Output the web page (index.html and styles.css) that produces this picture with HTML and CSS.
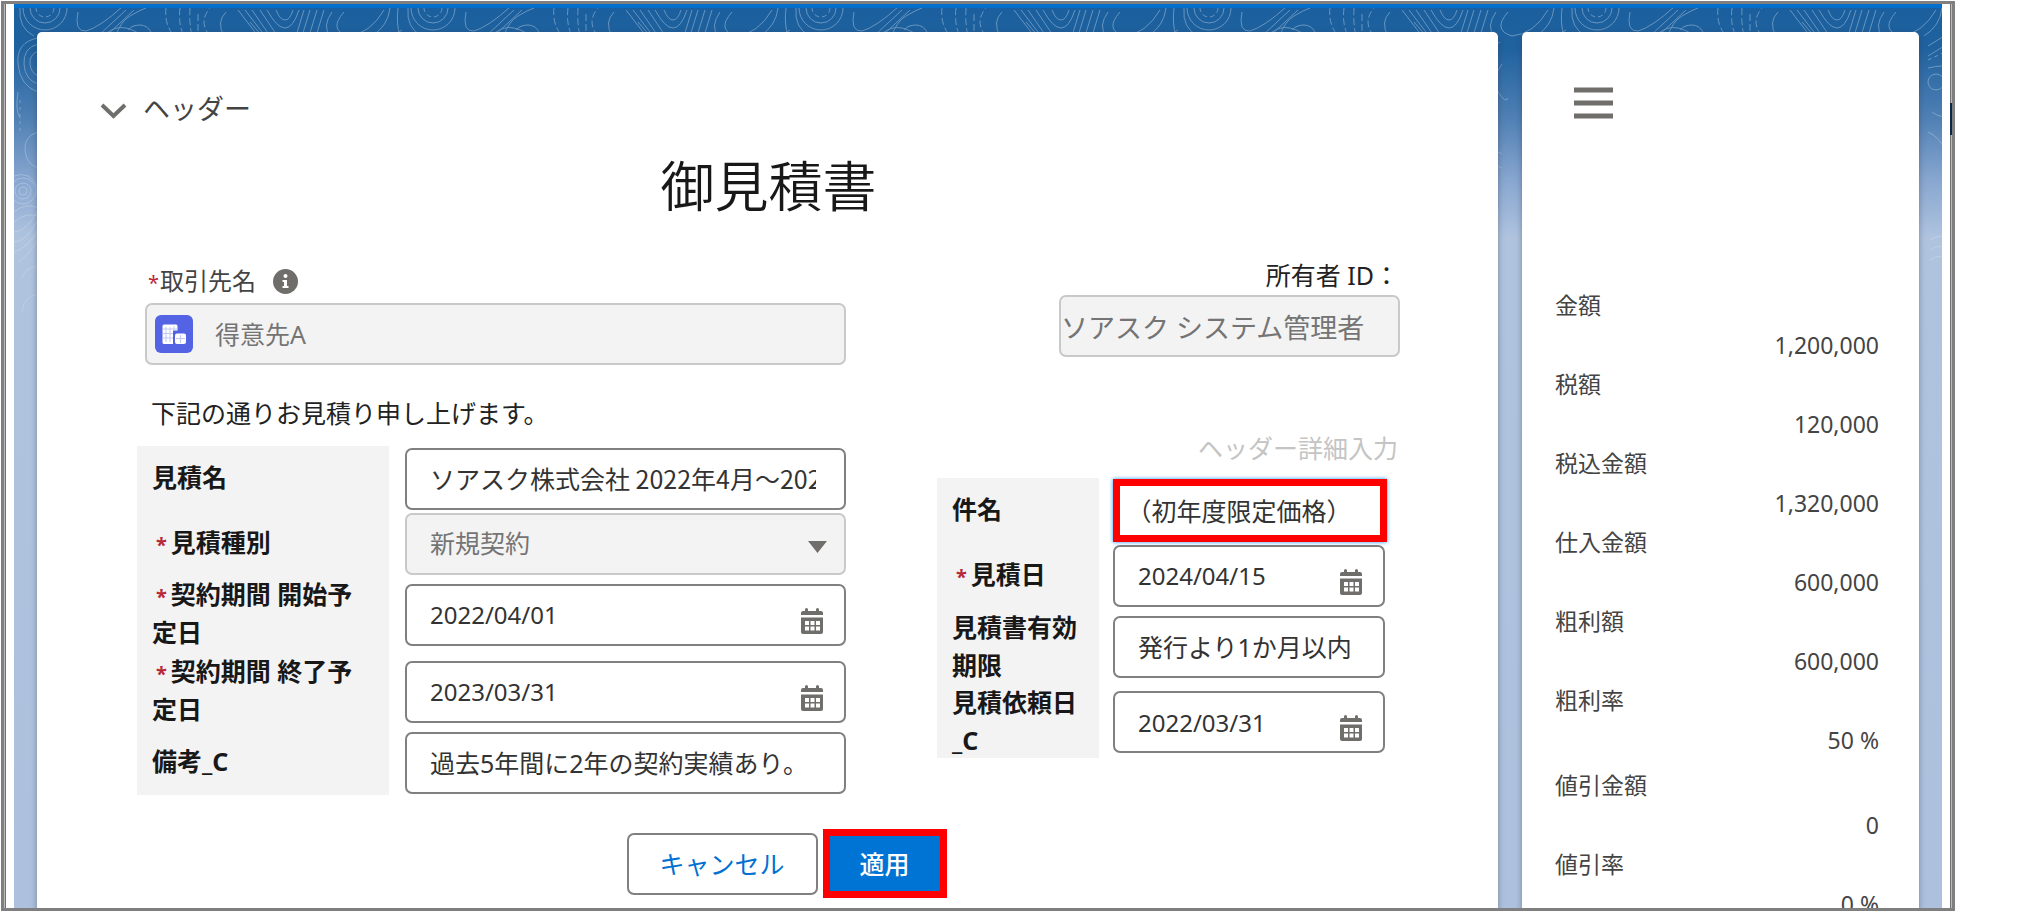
FILE: index.html
```html
<!DOCTYPE html>
<html lang="ja">
<head>
<meta charset="utf-8">
<meta name="viewport" content="width=device-width, initial-scale=1">
<title>御見積書</title>
<link rel="stylesheet" href="styles.css">
</head>
<body>
<svg class="sprite" aria-hidden="true">
  <symbol id="icon-calendar" viewBox="0 0 24 26">
    <path d="M1 7V5q0-2 2-2h2V1.500q0-1.500 1.500-1.500T8 1.500V3h8V1.500q0-1.500 1.500-1.500T19 1.500V3h2q2 0 2 2v2z"/>
    <path fill-rule="evenodd" d="M1 9.500h22V24q0 2-2 2H3q-2 0-2-2zM5 13v4h4v-4zm5.500 0v4h4v-4zm5.500 0v4h4v-4zM5 18.500v4h4v-4zm5.500 0v4h4v-4zm5.500 0v4h4v-4z"/>
  </symbol>
</svg>
<div class="frame">
  <div class="theme">
    <svg class="topo" aria-hidden="true">
      <defs>
        <pattern id="topo-lines" width="388" height="320" patternUnits="userSpaceOnUse">
          <g fill="none" stroke="#fff" stroke-width="1">
            <circle cx="31" cy="0" r="9" stroke-dasharray="5 3"/>
            <circle cx="31" cy="0" r="15"/>
            <circle cx="31" cy="0" r="22"/>
            <path d="M6 0q-2 20 14 28M64 4q-4 20 8 19q14-4 36-24M84 28L112 2M92 28L120 2M102 28q4-14 14-20t16-8M88 29q12-12 24-9t16 9M114 22q4-5 12-5t12 9"/>
            <path d="M152 0q-2 16 8 28M166 0q-2 16 4 28M196 28q-12-14 0-28M176 0q-1 16 2 28M184 6v20" stroke-dasharray="7 3"/>
            <path d="M210 28q-8-14 2-24M224 2l20 26M231 2l20 26M238 2l18 26M246 2l16 24M253 2q10 18 18 18t14-18M262 2q4 10 9 10t8-10M248 28l-12-14M290 2l-8 26M296 2l-8 26M303 2l-8 26M310 2l-8 26M318 4q-10 14-2 24M330 4q-16 18 4 24q22-2 36-26M376 0q-2 18-18 28M384 0q-2 16 2 28"/>
            <path d="M24 30q-22 4-20 26t20 28M24 36q-15 4-14 20t14 20M24 43q-9 4-8 13t8 12M4 84q-3 18 2 26M24 124q-14 4-13 18t13 18"/>
            <path d="M6 92v34" stroke-dasharray="3 4"/>
            <path d="M322 34q-16 10-26 2M324 56q-12 16-4 28t10 6M318 112q-10-12-22-6M324 146q-14-10-24 4M324 160q-12-8-24 2M318 200q-8-18-20 0M302 250q10-6 18-26"/>
            <circle cx="9" cy="183" r="4"/><circle cx="9" cy="183" r="8"/><circle cx="9" cy="183" r="13"/>
            <path d="M0 168q16-6 24 12M0 204q12-10 24-4M0 214q12-10 24-6M0 224q12 0 24-22M0 234q12 0 24-22M0 244q14-4 24-22M4 254q10-6 20-22M8 304q2-16 16-18M8 270q2-10 16-12"/>
            <path d="M362 38l26-16M362 48l26-16M362 60q16-4 26 0M366 104q10 8 22 2M362 124q22 10 20 44M364 232q12-8 24 0M364 242q12-8 24 0M364 252q12-8 24 0"/>
            <path d="M362 52l26-12" stroke-dasharray="4 3"/>
            <circle cx="370" cy="74" r="8"/>
          </g>
        </pattern>
        <linearGradient id="topo-fade" x1="0" y1="0" x2="0" y2="1">
          <stop offset="0" stop-color="#fff" stop-opacity=".34"/>
          <stop offset="1" stop-color="#fff" stop-opacity=".16"/>
        </linearGradient>
        <mask id="topo-mask"><rect width="100%" height="320" fill="url(#topo-fade)"/></mask>
      </defs>
      <rect width="100%" height="320" fill="url(#topo-lines)" mask="url(#topo-mask)"/>
    </svg>
    <main class="card quote">
      <button class="toggle" type="button" aria-expanded="true">
        <svg class="chevron" viewBox="0 0 27 20" aria-hidden="true"><path d="M2 6l11.500 11L25 6"/></svg>
        <span>ヘッダー</span>
      </button>
      <h1 class="title">御見積書</h1>
      <form class="form">
        <div class="columns">
          <div class="column column-left">
            <div class="account">
              <div class="account-label">
                <label for="account"><span class="star">*</span>取引先名</label>
                <svg class="info" viewBox="0 0 25 25" aria-label="情報"><circle cx="12.500" cy="12.500" r="12.500" fill="#706e6b"/><circle cx="12.500" cy="7" r="2" fill="#fff"/><path d="M9.500 11h4.500v6h1.500v2h-6v-2h1.500v-4H9.500z" fill="#fff"/></svg>
              </div>
              <div class="control">
                <input class="field field-account" id="account" type="text" value="得意先A" disabled>
                <svg class="account-icon" viewBox="0 0 38 38" aria-hidden="true">
                  <rect width="38" height="38" rx="6" fill="#5463e4"/>
                  <path fill="#fff" d="M9 9.500h12q1.500 0 1.500 1.500v4.500H18v13.500H9q-1.500 0-1.500-1.500V11q0-1.500 1.500-1.500z"/>
                  <rect x="20" y="18.500" width="11" height="10.500" rx="2" fill="#fff"/>
                  <path d="M11 12v15M15 12v15M19 11v4M8 14h14M8 18.500h10M8 23h10M25.500 20v8M21 23.500h9" stroke="#5463e4" stroke-width="1" opacity=".35"/>
                </svg>
              </div>
            </div>
            <p class="lead">下記の通りお見積り申し上げます。</p>
            <div class="rows rows-left">
              <label class="name" for="quote-name">見積名</label>
              <div class="cell"><div class="control"><input class="field field-long" id="quote-name" type="text" value="ソアスク株式会社 2022年4月～2023年3月"></div></div>
              <label class="name" for="quote-type"><span><span class="star">*</span>見積種別</span></label>
              <div class="cell"><div class="control">
                <select class="field" id="quote-type" disabled><option>新規契約</option></select>
                <svg class="arrow" viewBox="0 0 19 12" aria-hidden="true"><path d="M0 0h19L9.500 12z"/></svg>
              </div></div>
              <label class="name" for="start-date"><span><span class="star">*</span>契約期間 開始予定日</span></label>
              <div class="cell"><div class="control">
                <input class="field field-date" id="start-date" type="text" value="2022/04/01">
                <button class="pick" type="button" aria-label="日付を選択"><svg><use href="#icon-calendar"/></svg></button>
              </div></div>
              <label class="name" for="end-date"><span><span class="star">*</span>契約期間 終了予定日</span></label>
              <div class="cell"><div class="control">
                <input class="field field-date" id="end-date" type="text" value="2023/03/31">
                <button class="pick" type="button" aria-label="日付を選択"><svg><use href="#icon-calendar"/></svg></button>
              </div></div>
              <label class="name" for="remarks">備考_C</label>
              <div class="cell"><div class="control"><input class="field" id="remarks" type="text" value="過去5年間に2年の契約実績あり。"></div></div>
            </div>
          </div>
          <div class="column column-right">
            <label class="owner-label" for="owner">所有者 ID：</label>
            <input class="field field-owner" id="owner" type="text" value="ソアスク システム管理者" disabled>
            <a class="detail-link" href="#">ヘッダー詳細入力</a>
            <div class="rows rows-right">
              <label class="name" for="subject">件名</label>
              <div class="cell"><div class="control"><input class="field field-marked" id="subject" type="text" value="（初年度限定価格）"></div></div>
              <label class="name" for="quote-date"><span><span class="star">*</span>見積日</span></label>
              <div class="cell"><div class="control">
                <input class="field field-date" id="quote-date" type="text" value="2024/04/15">
                <button class="pick" type="button" aria-label="日付を選択"><svg><use href="#icon-calendar"/></svg></button>
              </div></div>
              <label class="name" for="valid-until">見積書有効期限</label>
              <div class="cell"><div class="control"><input class="field" id="valid-until" type="text" value="発行より1か月以内"></div></div>
              <label class="name" for="request-date">見積依頼日_C</label>
              <div class="cell"><div class="control">
                <input class="field field-date" id="request-date" type="text" value="2022/03/31">
                <button class="pick" type="button" aria-label="日付を選択"><svg><use href="#icon-calendar"/></svg></button>
              </div></div>
            </div>
          </div>
        </div>
        <div class="actions">
          <button class="button" type="button">キャンセル</button>
          <button class="button button-apply" type="submit">適用</button>
        </div>
      </form>
    </main>
    <aside class="card summary">
      <button class="menu" type="button" aria-label="メニュー">
        <svg viewBox="0 0 39 32" aria-hidden="true"><path d="M0 3h39M0 16h39M0 29h39"/></svg>
      </button>
      <dl class="totals">
        <dt>金額</dt><dd>1,200,000</dd>
        <dt>税額</dt><dd>120,000</dd>
        <dt>税込金額</dt><dd>1,320,000</dd>
        <dt>仕入金額</dt><dd>600,000</dd>
        <dt>粗利額</dt><dd>600,000</dd>
        <dt>粗利率</dt><dd>50 %</dd>
      </dl>
      <dl class="totals">
        <dt>値引金額</dt><dd>0</dd>
        <dt>値引率</dt><dd>0 %</dd>
      </dl>
    </aside>
  </div>
</div>
</body>
</html>
```

FILE: styles.css
```css
* {
  box-sizing: border-box;
}

body {
  margin: 0;
  background: #fff;
  color: #222;
  font-family: "Noto Sans", "Noto Sans CJK JP", sans-serif;
  font-size: 25px;
  overflow: hidden;
}

input,
select,
button {
  font: inherit;
  color: inherit;
  margin: 0;
}

button {
  cursor: pointer;
}

.sprite {
  position: absolute;
  width: 0;
  height: 0;
}

.frame {
  position: relative;
  margin: 1px 72px 0 1px;
  height: calc(100vh - 7px);
  padding: 0 10px;
  border: 3px solid #7f7f7f;
  box-shadow: inset 1px 0 #bbb, inset -1px 0 #bbb, inset 2px 0 #707070, inset -2px 0 #707070;
  overflow: hidden;
}

.frame::after {
  content: "";
  position: absolute;
  top: 99px;
  right: 0;
  width: 2px;
  height: 32px;
  background: #0d2742;
}

.theme {
  position: relative;
  display: grid;
  grid-template-columns: minmax(0, 1fr) 397px;
  gap: 24px;
  height: 100%;
  padding: 24px 23px 0;
  border-top: 4px solid #0570cc;
  background: linear-gradient(#1b5f9e 0, #1f629f 40px, #4f80b4 110px, #86a5cf 170px, #afc3df 230px, #adc1de 100%);
}

.topo {
  position: absolute;
  top: 0;
  left: 0;
  width: 100%;
  height: 320px;
}

.card {
  position: relative;
  background: #fff;
  border-radius: 5px 5px 0 0;
  box-shadow: 0 2px 6px rgba(60, 60, 80, 0.45);
}

.quote {
  padding: 57px 98px 0 100px;
}

.toggle {
  display: flex;
  align-items: center;
  gap: 16px;
  margin-left: -37px;
  padding: 0;
  border: 0;
  background: none;
  color: #444;
  font-size: 27px;
  line-height: 40px;
}

.chevron {
  width: 27px;
  height: 20px;
  fill: none;
  stroke: #706e6b;
  stroke-width: 4;
}

.title {
  margin: 17px 0 31px;
  color: #181818;
  font-size: 54px;
  font-weight: 350;
  line-height: 80px;
  text-align: center;
}

.columns {
  display: grid;
  grid-template-columns: minmax(0, 709fr) minmax(0, 463fr);
  gap: 91px;
}

.column-left {
  padding-top: 6px;
}

.column-right {
  display: flex;
  flex-direction: column;
}

.account {
  padding-left: 8px;
}

.account-label {
  display: flex;
  align-items: center;
  gap: 17px;
  height: 36px;
  margin-bottom: 4px;
  padding-left: 3px;
  color: #444;
  font-size: 24px;
  line-height: 36px;
}

.info {
  width: 25px;
  height: 25px;
}

.star {
  margin-right: 1px;
  color: #b8283a;
  font-size: 20px;
  line-height: 1;
}

.control {
  position: relative;
  flex: 1;
}

.field {
  display: block;
  width: 100%;
  height: 62px;
  padding: 0 23px 2px;
  border: 2px solid #808080;
  border-radius: 7px;
  background: #fff;
  color: #333;
  line-height: 40px;
  appearance: none;
}

.field:disabled {
  border-color: #c9c9c9;
  background: #f3f3f3;
  color: #747474;
  opacity: 1;
}

.field-account {
  padding-left: 68px;
}

.field-long {
  padding-right: 28px;
  font-family: "Noto Sans CJK JP", sans-serif;
}

.field-date {
  padding-right: 56px;
  padding-bottom: 0;
  font-size: 24px;
}

.field-owner {
  align-self: flex-end;
  width: 341px;
  padding: 0;
  font-size: 27px;
}

.field-marked {
  width: calc(100% + 2px);
  height: 63px;
  padding: 0 19px 2px;
  border: 7px solid #f00;
  border-radius: 0;
  box-shadow: 0 0 4px #1b96ff;
  font-feature-settings: "halt";
}

.account-icon {
  position: absolute;
  top: 12px;
  left: 10px;
  width: 38px;
  height: 38px;
}

.arrow {
  position: absolute;
  top: 28px;
  right: 19px;
  width: 19px;
  height: 12px;
  fill: #706e6b;
  pointer-events: none;
}

.pick {
  position: absolute;
  top: 24px;
  right: 22px;
  width: 24px;
  height: 26px;
  padding: 0;
  border: 0;
  background: none;
}

.pick svg {
  display: block;
  width: 24px;
  height: 26px;
  fill: #706e6b;
}

.lead {
  margin: 28px 0 13px;
  padding-left: 14px;
  line-height: 40px;
}

.owner-label {
  padding-right: 1px;
  margin-bottom: 2px;
  line-height: 36px;
  text-align: right;
}

.detail-link {
  align-self: flex-end;
  margin: 71px 2px 10px 0;
  color: #c4c4c4;
  line-height: 40px;
  text-decoration: none;
}

.rows {
  display: grid;
}

.rows-left {
  grid-template-columns: minmax(0, 252fr) minmax(0, 457fr);
  grid-template-rows: 65px 65px 77px 77px 65px;
}

.rows-right {
  grid-template-columns: minmax(0, 162fr) minmax(0, 286fr);
  grid-template-rows: 65px 65px 78px 72px;
  padding-right: 15px;
}

.name {
  display: flex;
  align-items: center;
  padding: 0 14px 3px 15px;
  background: #f3f3f3;
  color: #181818;
  font-weight: 700;
  line-height: 38px;
}

.name .star {
  margin-left: 4px;
  margin-right: 4px;
}

.cell {
  display: flex;
  align-items: center;
  padding-left: 16px;
}

.rows-right .cell {
  padding-left: 14px;
}

.actions {
  display: flex;
  align-items: center;
  justify-content: center;
  gap: 5px;
  margin-top: 34px;
  padding-left: 36px;
}

.button {
  width: 191px;
  height: 62px;
  padding: 0;
  border: 2px solid #808080;
  border-radius: 7px;
  background: #fff;
  color: #0070d2;
  line-height: 40px;
}

.button-apply {
  width: 124px;
  height: 69px;
  border: 7px solid #f00;
  border-radius: 0;
  background: #0074d4;
  color: #fff;
  font-weight: 500;
}

.summary {
  padding: 55px 40px 0 33px;
}

.menu {
  display: block;
  margin: 0 0 166px 19px;
  padding: 0;
  border: 0;
  background: none;
}

.menu svg {
  display: block;
  width: 39px;
  height: 32px;
  stroke: #706e6b;
  stroke-width: 5;
}

.totals {
  margin: 0 0 6px;
  color: #444;
  font-size: 23px;
}

.totals dt {
  line-height: 40px;
}

.totals dd {
  margin: 0;
  padding-top: 2px;
  line-height: 37px;
  text-align: right;
}
```
